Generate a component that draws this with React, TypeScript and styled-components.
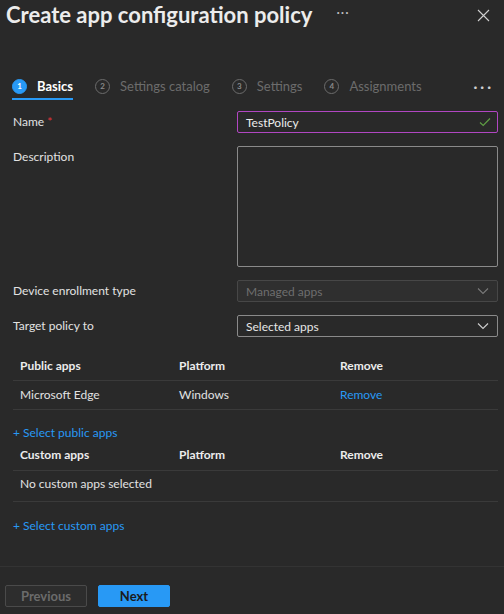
import React from 'react';
import styled, { createGlobalStyle } from 'styled-components';

const GlobalStyle = createGlobalStyle`
  html, body {
    margin: 0;
    padding: 0;
    background: #292929;
  }
  body {
    font-family: Lato, 'Segoe UI', sans-serif;
    font-size: 12px;
    color: #e2e2e2;
  }
`;

const Page = styled.div`
  width: 504px;
  height: 614px;
  display: flex;
  flex-direction: column;
  background: #292929;
  overflow: hidden;
`;

const Header = styled.div`
  display: flex;
  align-items: center;
  height: 30px;
  padding: 0 14px 0 6px;
`;

const Title = styled.h1`
  margin: 0;
  font-size: 22px;
  font-weight: 700;
  color: #ececec;
  line-height: 30px;
  white-space: nowrap;
`;

const HeaderDots = styled.span`
  margin-left: 24px;
  color: #bdbdbd;
  font-size: 13px;
  letter-spacing: 1px;
  margin-top: -6px;
`;

const CloseButton = styled.button`
  margin-left: auto;
  background: none;
  border: none;
  padding: 0;
  display: flex;
  color: #cfcfcf;
`;

const Steps = styled.div`
  display: flex;
  align-items: center;
  margin-top: 42px;
  padding: 0 10px 0 12px;
  height: 28px;
`;

const Step = styled.div<{ $active?: boolean }>`
  display: flex;
  align-items: center;
  gap: 10px;
  height: 100%;
  margin-right: 22px;
  color: ${p => (p.$active ? '#ffffff' : '#6c6c6c')};
  font-weight: ${p => (p.$active ? 700 : 400)};
  font-size: 13px;
  border-bottom: 2px solid ${p => (p.$active ? '#2899f5' : 'transparent')};
  box-sizing: border-box;
  padding-top: 2px;
`;

const StepCircle = styled.span<{ $active?: boolean }>`
  width: 15px;
  height: 15px;
  border-radius: 50%;
  box-sizing: border-box;
  display: flex;
  align-items: center;
  justify-content: center;
  font-size: 8px;
  font-weight: 700;
  background: ${p => (p.$active ? '#2899f5' : 'transparent')};
  border: 1.5px solid ${p => (p.$active ? '#2899f5' : '#6c6c6c')};
  color: ${p => (p.$active ? '#ffffff' : '#8a8a8a')};
`;

const StepDots = styled.span`
  margin-left: auto;
  color: #cfcfcf;
  font-size: 14px;
  letter-spacing: 3px;
  font-weight: 700;
`;

const Content = styled.div`
  flex: 1;
  padding: 11px 6px 0 13px;
`;

const FormRow = styled.div`
  display: grid;
  grid-template-columns: 224px 1fr;
  align-items: start;
  margin-bottom: 13px;
`;

const Label = styled.label`
  line-height: 21px;
  color: #e2e2e2;
`;

const Required = styled.span`
  color: #e3343a;
  margin-left: 3px;
`;

const TextInput = styled.div`
  height: 22px;
  box-sizing: border-box;
  border: 1px solid #b146c2;
  border-radius: 2px;
  display: flex;
  align-items: center;
  padding: 0 6px 0 8px;
  color: #ececec;
`;

const InputCheck = styled.span`
  margin-left: auto;
  display: flex;
  color: #5f9e44;
`;

const TextArea = styled.div`
  height: 121px;
  box-sizing: border-box;
  border: 1px solid #8a8a8a;
  border-radius: 2px;
`;

const Dropdown = styled.div<{ $disabled?: boolean }>`
  height: 22px;
  box-sizing: border-box;
  border: 1px solid ${p => (p.$disabled ? '#474747' : '#8a8a8a')};
  background: ${p => (p.$disabled ? '#2f2f2f' : 'transparent')};
  color: ${p => (p.$disabled ? '#6e6e6e' : '#e6e6e6')};
  border-radius: 2px;
  display: flex;
  align-items: center;
  padding: 0 8px;
`;

const Chevron = styled.span<{ $disabled?: boolean }>`
  margin-left: auto;
  display: flex;
  color: ${p => (p.$disabled ? '#7a7a7a' : '#cfcfcf')};
`;

const Table = styled.div<{ $gap: number }>`
  margin-top: ${p => p.$gap}px;
`;

const TableRow = styled.div<{ $head?: boolean; $height?: number; $pad?: number }>`
  display: grid;
  grid-template-columns: 159px 161px 1fr;
  padding: 0 7px ${p => p.$pad ?? 0}px;
  align-items: ${p => (p.$head ? 'end' : 'center')};
  height: ${p => p.$height ?? 29}px;
  box-sizing: border-box;
  border-bottom: 1px solid #3a3a3a;
  font-weight: ${p => (p.$head ? 700 : 400)};
  color: ${p => (p.$head ? '#ececec' : '#e2e2e2')};
  line-height: 18px;
`;

const LinkText = styled.span`
  color: #2899f5;
`;

const AddLink = styled.div<{ $top: number }>`
  color: #2899f5;
  margin-top: ${p => p.$top}px;
  line-height: 18px;
`;

const Footer = styled.div`
  border-top: 1px solid #333333;
  padding: 18px 5px 7px;
  display: flex;
  gap: 11px;
`;

const Button = styled.button<{ $primary?: boolean; $w: number }>`
  width: ${p => p.$w}px;
  height: 22px;
  border-radius: 2px;
  font-family: inherit;
  font-size: 13px;
  font-weight: 700;
  padding: 0;
  border: 1px solid ${p => (p.$primary ? '#2899f5' : '#4a4a4a')};
  background: ${p => (p.$primary ? '#2899f5' : '#2d2d2d')};
  color: ${p => (p.$primary ? '#1b1b1b' : '#6b6b6b')};
`;

const ChevronIcon = () => (
  <svg width="12" height="8" viewBox="0 0 12 8" fill="none">
    <path d="M1 1.5 L6 6.5 L11 1.5" stroke="currentColor" strokeWidth="1.1" />
  </svg>
);

const steps = ['Basics', 'Settings catalog', 'Settings', 'Assignments'];

const App = () => (
  <Page>
    <GlobalStyle />
    <Header>
      <Title>Create app configuration policy</Title>
      <HeaderDots>···</HeaderDots>
      <CloseButton aria-label="Close">
        <svg width="13" height="13" viewBox="0 0 13 13" fill="none">
          <path d="M1 1 L12 12 M12 1 L1 12" stroke="currentColor" strokeWidth="1.1" />
        </svg>
      </CloseButton>
    </Header>

    <Steps>
      {steps.map((s, i) => (
        <Step key={s} $active={i === 0}>
          <StepCircle $active={i === 0}>{i + 1}</StepCircle>
          {s}
        </Step>
      ))}
      <StepDots>···</StepDots>
    </Steps>

    <Content>
      <FormRow>
        <Label>
          Name<Required>*</Required>
        </Label>
        <TextInput>
          TestPolicy
          <InputCheck>
            <svg width="12" height="10" viewBox="0 0 12 10" fill="none">
              <path d="M1 5.5 L4.2 8.5 L11 1.5" stroke="currentColor" strokeWidth="1.2" />
            </svg>
          </InputCheck>
        </TextInput>
      </FormRow>
      <FormRow>
        <Label>Description</Label>
        <TextArea />
      </FormRow>
      <FormRow>
        <Label>Device enrollment type</Label>
        <Dropdown $disabled>
          Managed apps
          <Chevron $disabled>
            <ChevronIcon />
          </Chevron>
        </Dropdown>
      </FormRow>
      <FormRow>
        <Label>Target policy to</Label>
        <Dropdown>
          Selected apps
          <Chevron>
            <ChevronIcon />
          </Chevron>
        </Dropdown>
      </FormRow>

      <Table $gap={11}>
        <TableRow $head $height={31} $pad={5}>
          <span>Public apps</span>
          <span>Platform</span>
          <span>Remove</span>
        </TableRow>
        <TableRow>
          <span>Microsoft Edge</span>
          <span>Windows</span>
          <LinkText>Remove</LinkText>
        </TableRow>
      </Table>
      <AddLink $top={14}>+ Select public apps</AddLink>

      <Table $gap={4}>
        <TableRow $head $height={25} $pad={7}>
          <span>Custom apps</span>
          <span>Platform</span>
          <span>Remove</span>
        </TableRow>
        <TableRow $height={31} $pad={5}>
          <span>No custom apps selected</span>
          <span />
          <span />
        </TableRow>
      </Table>
      <AddLink $top={15}>+ Select custom apps</AddLink>
    </Content>

    <Footer>
      <Button $w={82}>Previous</Button>
      <Button $primary $w={72}>Next</Button>
    </Footer>
  </Page>
);

export default App;
